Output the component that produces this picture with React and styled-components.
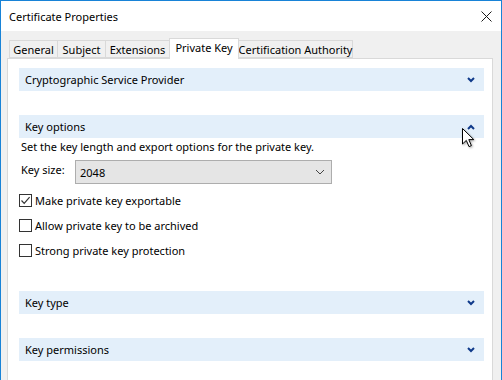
import React, { useState } from 'react'
import styled, { createGlobalStyle } from 'styled-components'

const GlobalStyle = createGlobalStyle`
  html, body {
    margin: 0;
    padding: 0;
    background: #ffffff;
  }
  body {
    font-family: "Noto Sans", "Open Sans", sans-serif;
    font-size: 11px;
    color: #000;
  }
`;

const tabs = [
    { label: 'General', width: 49 },
    { label: 'Subject', width: 49 },
    { label: 'Extensions', width: 65 },
    { label: 'Private Key', width: 70 },
    { label: 'Certification Authority', width: 115 },
]

const sections = [
    { title: 'Cryptographic Service Provider', open: false },
    { title: 'Key options', open: true },
    { title: 'Key type', open: false },
    { title: 'Key permissions', open: false },
]

function Chevron({ up }) {
    return (
        <svg width="8" height="6" viewBox="0 0 8 6">
            <path
                d={up ? 'M1 5 L4 2 L7 5' : 'M1 1 L4 4 L7 1'}
                fill="none"
                stroke="#0f3a8a"
                strokeWidth="2"
            />
        </svg>
    )
}

function CheckBox({ checked, label, onToggle }) {
    return (
        <CheckRow onClick={onToggle}>
            <Box>
                {checked && (
                    <svg width="11" height="11" viewBox="0 0 11 11">
                        <path d="M1.5 5.5 L4.2 8.3 L9.6 2.2" fill="none" stroke="#333" strokeWidth="1.2" />
                    </svg>
                )}
            </Box>
            <span>{label}</span>
        </CheckRow>
    )
}

function App() {
    const [active] = useState('Private Key')
    const [opts, setOpts] = useState({ exportable: true, archived: false, strong: false })
    const toggle = name => () => setOpts({ ...opts, [name]: !opts[name] })

    return (
        <>
            <GlobalStyle />
            <Window>
                <TitleBar>
                    <Title>Certificate Properties</Title>
                    <CloseButton>
                        <svg width="11" height="11" viewBox="0 0 11 11">
                            <path d="M0.5 0.5 L10.5 10.5 M10.5 0.5 L0.5 10.5" stroke="#1a1a1a" strokeWidth="1" />
                        </svg>
                    </CloseButton>
                </TitleBar>

                <Body>
                    <TabStrip>
                        {tabs.map(t => (
                            <Tab key={t.label} $w={t.width} $active={t.label === active}>
                                {t.label}
                            </Tab>
                        ))}
                    </TabStrip>

                    <Panel>
                        {sections.map(s => (
                            <Section key={s.title}>
                                <SectionHeader>
                                    <span>{s.title}</span>
                                    <Chevron up={s.open} />
                                </SectionHeader>
                                {s.open && (
                                    <SectionBody>
                                        <Description>Set the key length and export options for the private key.</Description>
                                        <FieldRow>
                                            <FieldLabel>Key size:</FieldLabel>
                                            <Select>
                                                <span>2048</span>
                                                <svg width="10" height="6" viewBox="0 0 10 6">
                                                    <path d="M1 1 L5 5 L9 1" fill="none" stroke="#444" strokeWidth="1" />
                                                </svg>
                                            </Select>
                                        </FieldRow>
                                        <Checks>
                                            <CheckBox checked={opts.exportable} label="Make private key exportable" onToggle={toggle('exportable')} />
                                            <CheckBox checked={opts.archived} label="Allow private key to be archived" onToggle={toggle('archived')} />
                                            <CheckBox checked={opts.strong} label="Strong private key protection" onToggle={toggle('strong')} />
                                        </Checks>
                                    </SectionBody>
                                )}
                            </Section>
                        ))}
                    </Panel>
                </Body>

                <Cursor width="13" height="20" viewBox="0 0 13 20">
                    <path d="M0.5 0.5 L0.5 16 L4.3 12.4 L7 18.6 L9.4 17.6 L6.8 11.6 L11.8 11.6 Z" fill="#fff" stroke="#000" strokeWidth="1" strokeLinejoin="miter" />
                </Cursor>
            </Window>
        </>
    )
}

const Window = styled.div`
    position: relative;
    width: 502px;
    height: 380px;
    box-sizing: border-box;
    border: 1px solid #1883d7;
    border-bottom: none;
    background: #f0f0f0;
    overflow: hidden;
    display: flex;
    flex-direction: column;
`;

const TitleBar = styled.div`
    height: 30px;
    flex-shrink: 0;
    background: #fff;
    display: flex;
    align-items: center;
    justify-content: space-between;
    padding: 0 9px 0 8px;
`;

const Title = styled.div`
    font-size: 11px;
    color: #000;
    margin-top: 1px;
`;

const CloseButton = styled.div`
    display: flex;
    align-items: center;
    margin-top: 1px;
`;

const Body = styled.div`
    flex: 1;
    display: flex;
    flex-direction: column;
    padding: 7px 8px 0 6px;
`;

const TabStrip = styled.div`
    display: flex;
    align-items: flex-end;
    height: 20px;
    padding-left: 2px;
    position: relative;
    z-index: 1;
`;

const Tab = styled.div`
    box-sizing: border-box;
    width: ${p => p.$w}px;
    height: ${p => (p.$active ? 21 : 18)}px;
    margin-left: -1px;
    margin-bottom: ${p => (p.$active ? -1 : 0)}px;
    &:first-child { margin-left: 0; }
    border: 1px solid #d9d9d9;
    border-bottom: ${p => (p.$active ? 'none' : '1px solid #d9d9d9')};
    background: ${p => (p.$active ? '#fff' : '#f0f0f0')};
    display: flex;
    align-items: center;
    justify-content: center;
    padding-bottom: ${p => (p.$active ? 3 : 0)}px;
    white-space: nowrap;
    font-size: 11px;
    color: #000;
    z-index: ${p => (p.$active ? 2 : 1)};
`;

const Panel = styled.div`
    flex: 1;
    background: #fff;
    border: 1px solid #d9d9d9;
    border-bottom: none;
    padding: 9px 8px 0 11px;
    display: flex;
    flex-direction: column;
    gap: 24px;
`;

const Section = styled.div`
    display: flex;
    flex-direction: column;
`;

const SectionHeader = styled.div`
    height: 23px;
    background: #e3effa;
    display: flex;
    align-items: center;
    justify-content: space-between;
    padding: 0 9px 0 6px;
    font-size: 11px;
    color: #000;
`;

const SectionBody = styled.div`
    display: flex;
    flex-direction: column;
    padding-top: 1px;
    padding-bottom: 10px;
`;

const Description = styled.div`
    padding-left: 2px;
    line-height: 16px;
`;

const FieldRow = styled.div`
    display: flex;
    align-items: center;
    margin-top: 5px;
    padding-left: 2px;
`;

const FieldLabel = styled.span`
    width: 54px;
    margin-top: -6px;
`;

const Select = styled.div`
    box-sizing: border-box;
    width: 257px;
    height: 24px;
    background: #e5e5e5;
    border: 1px solid #adadad;
    display: flex;
    align-items: center;
    justify-content: space-between;
    padding: 0 6px 0 4px;
`;

const Checks = styled.div`
    display: flex;
    flex-direction: column;
    gap: 12px;
    margin-top: 10px;
`;

const CheckRow = styled.label`
    display: flex;
    align-items: center;
    gap: 3px;
    height: 13px;
    cursor: default;
`;

const Box = styled.span`
    box-sizing: border-box;
    width: 13px;
    height: 13px;
    border: 1px solid #333;
    background: #fff;
    display: flex;
    align-items: center;
    justify-content: center;
`;

const Cursor = styled.svg`
    position: absolute;
    left: 461px;
    top: 127px;
    filter: drop-shadow(1px 1px 1px rgba(0, 0, 0, 0.35));
`;

export default App
